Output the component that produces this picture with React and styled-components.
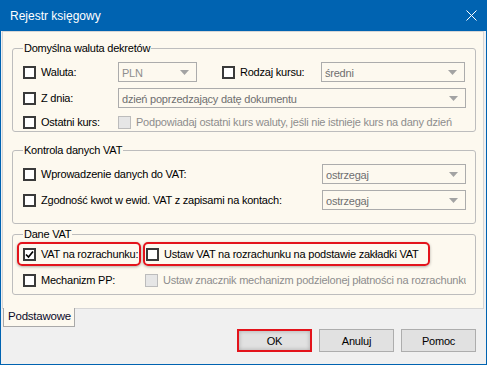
import React from 'react';
import styled, { createGlobalStyle } from 'styled-components';

// Windows 10 style settings dialog
const GlobalStyle = createGlobalStyle`
  html, body {
    margin: 0;
    padding: 0;
    background: #0063b1;
  }
  body {
    width: 487px;
    height: 365px;
    overflow: hidden;
  }
`;

const Window = styled.div`
  width: 487px;
  height: 365px;
  box-sizing: border-box;
  display: flex;
  flex-direction: column;
  background: #0063b1;
  padding: 0 1px 1px;
  font-family: "Liberation Sans", Arial, sans-serif;
  font-size: 11px;
  letter-spacing: -0.22px;
  color: #000;
`;

const TitleBar = styled.div`
  height: 31px;
  flex: none;
  display: flex;
  align-items: center;
  justify-content: space-between;
  padding: 0 9px;
  color: #fff;
  font-size: 12px;
  letter-spacing: 0;
`;

const Client = styled.div`
  flex: 1;
  display: flex;
  flex-direction: column;
  background: #f0f0f0;
  min-height: 0;
`;

const Panel = styled.div`
  flex: 1;
  display: flex;
  flex-direction: column;
  margin: 0 2px 0 1px;
  padding: 9px 7px 0 9px;
  background: #fdf9ef;
  border: 1px solid #d6d6d6;
`;

const Group = styled.fieldset`
  margin: ${p => p.$mt || 0}px 0 0;
  padding: ${p => p.$pad};
  border: 1px solid #bdbdbd;
  border-radius: 3px;
  min-width: 0;
  display: flex;
  flex-direction: column;
  gap: ${p => p.$gap || 6}px;
`;

const Legend = styled.legend`
  padding: 0 1px;
  margin-left: 0;
  line-height: 14px;
`;

const Row = styled.div`
  display: flex;
  align-items: ${p => p.$align || 'flex-start'};
  height: ${p => p.$h || 20}px;
  margin-top: ${p => p.$mt || 0}px;
  gap: ${p => p.$gap || 0}px;
  overflow: ${p => (p.$clip === false ? 'visible' : 'hidden')};
  white-space: nowrap;
`;

const LabelCell = styled.label`
  display: flex;
  align-items: center;
  gap: 5px;
  height: 100%;
  flex: ${p => (p.$w ? 'none' : 1)};
  width: ${p => (p.$w ? `${p.$w}px` : 'auto')};
  margin-left: ${p => p.$ml || 0}px;
`;

const Box = styled.span`
  box-sizing: border-box;
  width: 13px;
  height: 13px;
  flex: none;
  display: inline-flex;
  align-items: center;
  justify-content: center;
  border: ${p => (p.$disabled ? '1px solid #bcbcbc' : '2px solid #3a3a3a')};
  background: ${p => (p.$disabled ? '#e6e6e6' : '#fff')};
`;

const Muted = styled.span`
  color: #8d8d8d;
`;

const Combo = styled.div`
  box-sizing: border-box;
  height: 20px;
  flex: ${p => (p.$w ? 'none' : 1)};
  width: ${p => (p.$w ? `${p.$w}px` : 'auto')};
  display: flex;
  align-items: center;
  justify-content: space-between;
  padding: 1px 7px 0 3px;
  border: 1px solid #acacac;
  color: ${p => p.$color || '#6f6f6f'};
`;

const Highlight = styled.div`
  box-sizing: border-box;
  height: 24px;
  width: ${p => p.$w}px;
  flex: none;
  margin-left: ${p => p.$ml}px;
  padding-left: ${p => p.$pl}px;
  display: flex;
  align-items: center;
  gap: 5px;
  border: 2px solid #e3131b;
  border-radius: 5px;
  box-shadow: 0 1px 3px rgba(0, 0, 0, 0.3);
`;

const TabStrip = styled.div`
  height: 19px;
  flex: none;
  display: flex;
  margin-top: -1px;
`;

const Tab = styled.div`
  box-sizing: border-box;
  width: 72px;
  height: 19px;
  margin-left: 2px;
  padding: 2px 0 0 4px;
  background: #fdf9ef;
  border: 1px solid #a9a9a9;
  border-top: none;
  font-size: 11.5px;
  color: #0b0b2a;
`;

const ButtonRow = styled.div`
  display: flex;
  justify-content: flex-end;
  gap: 7px;
  padding: 2px 10px 12px 0;
`;

const Button = styled.button`
  box-sizing: border-box;
  width: 75px;
  height: 23px;
  padding: 0;
  font-family: inherit;
  font-size: 11px;
  letter-spacing: inherit;
  color: #000;
  background: #e1e1e1;
  border: ${p => (p.$marked ? '2px solid #e3131b' : '1px solid #adadad')};
  box-shadow: ${p => (p.$marked ? 'inset 0 0 4px rgba(0,0,0,0.25)' : 'none')};
`;

const Arrow = () => (
  <svg width="9" height="5" viewBox="0 0 9 5">
    <path d="M0 0 H9 L4.5 5 Z" fill="#a3a3a3" />
  </svg>
);

const Check = ({ checked, disabled }) => (
  <Box $disabled={disabled}>
    {checked && (
      <svg width="9" height="9" viewBox="0 0 9 9">
        <path d="M1 4.5 L3.5 7 L8 1.5" fill="none" stroke="#000" strokeWidth="1.7" />
      </svg>
    )}
  </Box>
);

const CloseIcon = () => (
  <svg width="11" height="11" viewBox="0 0 11 11">
    <path d="M0.5 0.5 L10.5 10.5 M10.5 0.5 L0.5 10.5" stroke="#fff" strokeWidth="1" />
  </svg>
);

export default function App() {
  return (
    <>
      <GlobalStyle />
      <Window>
        <TitleBar>
          <span>Rejestr księgowy</span>
          <CloseIcon />
        </TitleBar>
        <Client>
          <Panel>
            <Group $pad="7px 9px 2px 10px">
              <Legend>Domyślna waluta dekretów</Legend>
              <Row>
                <LabelCell $w={95}><Check />Waluta:</LabelCell>
                <Combo $w={79} $color="#8e8e8e">PLN<Arrow /></Combo>
                <LabelCell $w={99} $ml={25}><Check />Rodzaj kursu:</LabelCell>
                <Combo $w={144}>średni<Arrow /></Combo>
              </Row>
              <Row>
                <LabelCell $w={95}><Check />Z dnia:</LabelCell>
                <Combo>dzień poprzedzający datę dokumentu<Arrow /></Combo>
              </Row>
              <Row $h={14} $mt={1} $align="center">
                <LabelCell $w={95}><Check />Ostatni kurs:</LabelCell>
                <LabelCell><Check disabled /><Muted>Podpowiadaj ostatni kurs waluty, jeśli nie istnieje kurs na dany dzień</Muted></LabelCell>
              </Row>
            </Group>

            <Group $mt={11} $pad="7px 9px 13px 10px">
              <Legend>Kontrola danych VAT</Legend>
              <Row $align="center">
                <LabelCell><Check />Wprowadzenie danych do VAT:</LabelCell>
                <Combo $w={144}>ostrzegaj<Arrow /></Combo>
              </Row>
              <Row $align="center">
                <LabelCell><Check />Zgodność kwot w ewid. VAT z zapisami na kontach:</LabelCell>
                <Combo $w={144}>ostrzegaj<Arrow /></Combo>
              </Row>
            </Group>

            <Group $mt={3} $pad="1px 9px 7px 10px" $gap={7}>
              <Legend>Dane VAT</Legend>
              <Row $h={24} $align="center" $gap={2} $clip={false}>
                <Highlight $w={124} $ml={-6} $pl={4}><Check checked />VAT na rozrachunku:</Highlight>
                <Highlight $w={287} $ml={0} $pl={1}><Check />Ustaw VAT na rozrachunku na podstawie zakładki VAT</Highlight>
              </Row>
              <Row $h={14} $align="center">
                <LabelCell $w={122}><Check />Mechanizm PP:</LabelCell>
                <LabelCell><Check disabled /><Muted>Ustaw znacznik mechanizm podzielonej płatności na rozrachunku</Muted></LabelCell>
              </Row>
            </Group>
          </Panel>
          <TabStrip>
            <Tab>Podstawowe</Tab>
          </TabStrip>
          <ButtonRow>
            <Button $marked>OK</Button>
            <Button>Anuluj</Button>
            <Button>Pomoc</Button>
          </ButtonRow>
        </Client>
      </Window>
    </>
  );
}
